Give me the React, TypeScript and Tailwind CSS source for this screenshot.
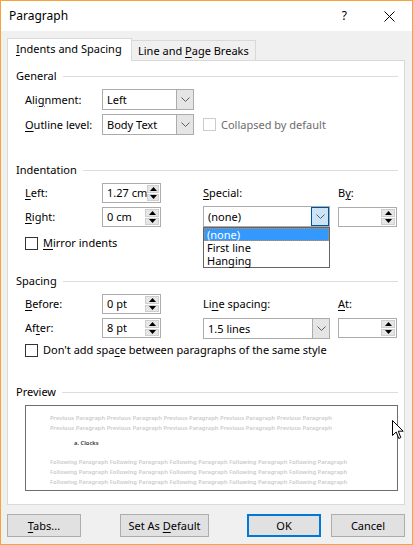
import React from "react";

function U({ children }: { children: React.ReactNode }) {
  return <span className="underline decoration-1 underline-offset-[2px]">{children}</span>;
}

function Chevron() {
  return (
    <svg width="9" height="5" viewBox="0 0 9 5">
      <path d="M0.5 0.5 L4.5 4.5 L8.5 0.5" fill="none" stroke="#5f5f5f" strokeWidth="1" />
    </svg>
  );
}

function Select({ value, wide, focused }: { value: string; wide?: boolean; focused?: boolean }) {
  return (
    <div
      className={
        wide
          ? "flex h-[21px] w-[127px] border border-[#acacac] bg-white"
          : "flex h-[21px] w-[92px] border border-[#acacac] bg-white"
      }
    >
      <div className="flex flex-1 items-center pl-[4px]">{value}</div>
      {focused ? (
        <div className="flex w-[18px] items-center justify-center border border-[#005499] bg-[#cce4f7]">
          <Chevron />
        </div>
      ) : (
        <div className="flex w-[17px] items-center justify-center border-l border-[#acacac] bg-[#e5e5e5]">
          <Chevron />
        </div>
      )}
    </div>
  );
}

function Spin({ value }: { value?: string }) {
  return (
    <div className="flex h-[20px] w-[59px] border border-[#acacac] bg-white">
      <div className="flex flex-1 items-center pl-[4px]">{value}</div>
      <div className="my-[1px] mr-[1px] flex w-[14px] flex-col gap-px">
        <div className="flex flex-1 items-center justify-center border border-[#cfcfcf] bg-[#e6e6e6]">
          <svg width="7" height="4" viewBox="0 0 7 4">
            <path d="M0 4 L3.5 0 L7 4 Z" fill="#000" />
          </svg>
        </div>
        <div className="flex flex-1 items-center justify-center border border-[#cfcfcf] bg-[#e6e6e6]">
          <svg width="7" height="4" viewBox="0 0 7 4">
            <path d="M0 0 L3.5 4 L7 0 Z" fill="#000" />
          </svg>
        </div>
      </div>
    </div>
  );
}

function Check({ disabled }: { disabled?: boolean }) {
  return (
    <div
      className={
        disabled
          ? "h-[13px] w-[13px] shrink-0 border border-[#cccccc] bg-white"
          : "h-[13px] w-[13px] shrink-0 border border-[#333333] bg-white"
      }
    />
  );
}

function Group({ title, className }: { title: string; className: string }) {
  return (
    <div className={"flex h-[16px] items-center pl-[8px] pr-[6px] " + className}>
      <span>{title}</span>
      <div className="ml-[6px] h-px flex-1 bg-[#dcdcdc]" />
    </div>
  );
}

const prev = "Previous Paragraph Previous Paragraph Previous Paragraph Previous Paragraph Previous Paragraph";
const follow =
  "Following Paragraph Following Paragraph Following Paragraph Following Paragraph Following Paragraph";

export default function App() {
  return (
    <div
      className="relative flex h-[545px] w-[413px] flex-col overflow-hidden whitespace-nowrap border border-[#f5a33a] bg-[#f0f0f0] text-[11px] leading-[16px] text-black"
      style={{ fontFamily: '"Noto Sans", "Liberation Sans", sans-serif' }}
    >
      {/* title bar */}
      <div className="flex h-[30px] shrink-0 items-center bg-white pl-[8px] pr-[17px] text-[12px]">
        <span>Paragraph</span>
        <span className="ml-auto">?</span>
        <svg className="ml-[37px]" width="11" height="11" viewBox="0 0 11 11">
          <path d="M0.5 0.5 L10.5 10.5 M10.5 0.5 L0.5 10.5" stroke="#000" strokeWidth="1" />
        </svg>
      </div>

      {/* tabs */}
      <div className="ml-[6px] mt-[7px] flex h-[22px] items-end">
        <div className="relative z-10 -mb-px flex h-[23px] w-[125px] items-center border border-b-0 border-[#d9d9d9] bg-white pl-[8px] pb-[2px]">
          <span>
            <U>I</U>ndents and Spacing
          </span>
        </div>
        <div className="flex h-[20px] w-[124px] items-center border border-b-0 border-l-0 border-[#d9d9d9] bg-[#f0f0f0] pl-[6px]">
          <span>
            Line and <U>P</U>age Breaks
          </span>
        </div>
      </div>

      {/* panel */}
      <div className="ml-[6px] flex h-[445px] w-[398px] flex-col border border-[#d9d9d9] bg-white">
        <Group title="General" className="mt-[7px]" />
        <div className="mt-[5px] grid grid-cols-[77px_101px_135px_59px] gap-y-[4px] pl-[17px]">
          <div className="flex h-[21px] items-center">
            Ali<U>g</U>nment:
          </div>
          <div>
            <Select value="Left" />
          </div>
          <div />
          <div />
          <div className="flex h-[21px] items-center">
            <U>O</U>utline level:
          </div>
          <div>
            <Select value="Body Text" />
          </div>
          <div className="col-span-2 flex items-center gap-[5px] text-[#6d6d6d]">
            <Check disabled />
            <span>Collapsed by default</span>
          </div>
        </div>

        <Group title="Indentation" className="mt-[27px]" />
        <div className="mt-[5px] grid grid-cols-[77px_101px_135px_59px] grid-rows-[20px_20px] gap-y-[4px] pl-[17px]">
          <div className="flex items-center">
            <U>L</U>eft:
          </div>
          <div>
            <Spin value="1.27 cm" />
          </div>
          <div className="flex items-center">
            <U>S</U>pecial:
          </div>
          <div className="flex items-center">
            B<U>y</U>:
          </div>
          <div className="flex items-center">
            <U>R</U>ight:
          </div>
          <div>
            <Spin value="0 cm" />
          </div>
          <div className="relative -mt-px">
            <Select value="(none)" wide focused />
            <div className="absolute left-0 top-[21px] z-20 flex h-[41px] w-[127px] flex-col border border-[#646464] bg-white leading-[12px]">
              <div className="flex h-[13px] items-center border border-dotted border-[#e08a2a] bg-[#3399ff] pl-[2px] text-white">
                (none)
              </div>
              <div className="flex h-[13px] items-center pl-[3px]">First line</div>
              <div className="flex h-[13px] items-center pl-[3px]">Hanging</div>
            </div>
          </div>
          <div>
            <Spin />
          </div>
        </div>
        <div className="mt-[8px] flex h-[16px] items-center gap-[5px] pl-[17px]">
          <Check />
          <span>
            <U>M</U>irror indents
          </span>
        </div>

        <Group title="Spacing" className="mt-[22px]" />
        <div className="mt-[5px] grid grid-cols-[77px_101px_135px_59px] grid-rows-[20px_20px] gap-y-[4px] pl-[17px]">
          <div className="flex items-center">
            <U>B</U>efore:
          </div>
          <div>
            <Spin value="0 pt" />
          </div>
          <div className="flex items-center">
            Li<U>n</U>e spacing:
          </div>
          <div className="flex items-center">
            <U>A</U>t:
          </div>
          <div className="flex items-center">
            Af<U>t</U>er:
          </div>
          <div>
            <Spin value="8 pt" />
          </div>
          <div>
            <Select value="1.5 lines" wide />
          </div>
          <div>
            <Spin />
          </div>
        </div>
        <div className="mt-[4px] flex h-[16px] items-center gap-[5px] pl-[17px]">
          <Check />
          <span>
            Don't add spa<U>c</U>e between paragraphs of the same style
          </span>
        </div>

        <Group title="Preview" className="mt-[26px]" />
        <div className="ml-[17px] mt-[5px] h-[86px] w-[373px] overflow-hidden border border-[#6e6e6e] bg-white pl-[24px] pt-[7px] text-[5.8px] font-semibold leading-[10px] text-[#cbcbcb]">
          <div>{prev}</div>
          <div>{prev}</div>
          <div className="mt-[5px] pl-[24px] text-[#333333]">a. Clocks</div>
          <div className="mt-[9px]">{follow}</div>
          <div>{follow}</div>
          <div>{follow}</div>
          <div>{follow}</div>
        </div>
      </div>

      {/* buttons */}
      <div className="ml-[6px] mt-[9px] flex">
        <button className="h-[23px] w-[74px] border border-[#adadad] bg-[#e1e1e1]">
          <U>T</U>abs...
        </button>
        <button className="ml-[39px] h-[23px] w-[89px] border border-[#adadad] bg-[#e1e1e1]">
          Set As <U>D</U>efault
        </button>
        <button className="ml-[38px] h-[23px] w-[74px] border-2 border-[#0078d7] bg-[#e1e1e1]">OK</button>
        <button className="ml-[10px] h-[23px] w-[74px] border border-[#adadad] bg-[#e1e1e1]">Cancel</button>
      </div>

      {/* mouse pointer over the preview */}
      <svg className="absolute left-[391px] top-[419px]" width="12" height="20" viewBox="0 0 12 20">
        <path
          d="M0.5 0.5 L0.5 15.5 L4.2 12 L6.8 18.5 L8.8 17.6 L6.3 11.2 L11.2 11.2 Z"
          fill="#fff"
          stroke="#000"
          strokeWidth="1"
          strokeLinejoin="round"
        />
      </svg>
    </div>
  );
}
